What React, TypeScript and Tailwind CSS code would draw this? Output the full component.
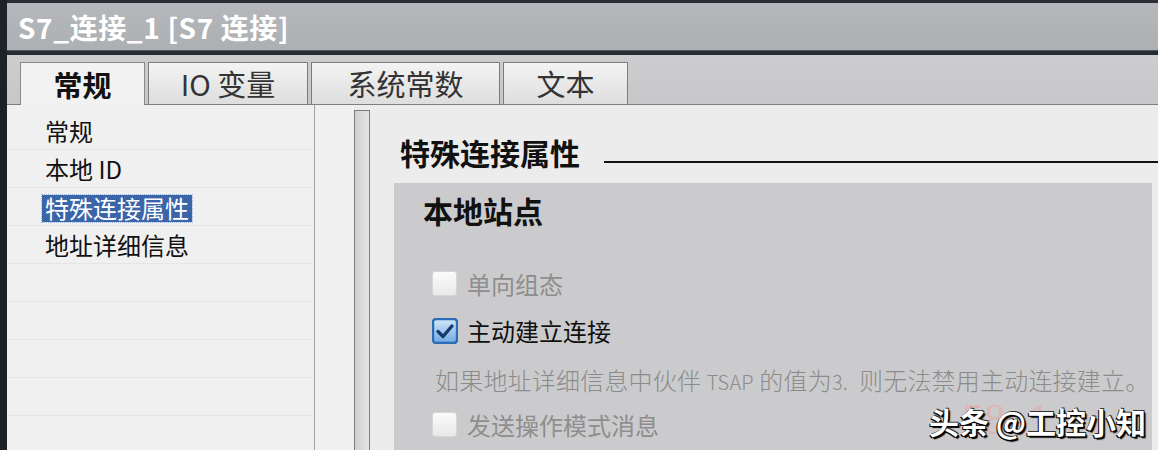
import React from 'react'

const font = { fontFamily: '"Noto Sans CJK SC", "Noto Sans", sans-serif' }

const tabs = [
  { label: '常规', w: 'w-[125px]', active: true },
  { label: 'IO 变量', w: 'w-[160px]', active: false },
  { label: '系统常数', w: 'w-[189px]', active: false },
  { label: '文本', w: 'w-[125px]', active: false },
]

const navItems = ['常规', '本地 ID', '特殊连接属性', '地址详细信息', '', '', '', '', '']

function CheckBox({ checked }: { checked?: boolean }) {
  if (checked) {
    return (
      <svg width="26" height="26" viewBox="0 0 26 26" className="shrink-0">
        <defs>
          <linearGradient id="cbBlue" x1="0" y1="0" x2="0" y2="1">
            <stop offset="0" stopColor="#d4e8fa" />
            <stop offset="1" stopColor="#6fa8e2" />
          </linearGradient>
        </defs>
        <rect x="1" y="1" width="24" height="24" rx="3" fill="url(#cbBlue)" stroke="#2a6db6" strokeWidth="2.4" />
        <path d="M6 13.5L11 18.5L20 8" fill="none" stroke="#173a6c" strokeWidth="3.4" strokeLinecap="round" strokeLinejoin="round" />
      </svg>
    )
  }
  return (
    <div className="w-[25px] h-[25px] shrink-0 rounded-[3px] border border-[#d6d6d6] bg-gradient-to-b from-[#fbfbfb] to-[#e9e9e9]" />
  )
}

export default function App() {
  return (
    <div className="relative w-[1158px] h-[450px] overflow-hidden flex bg-[#ececec]" style={font}>
      {/* left dark frame */}
      <div className="w-[7px] h-full shrink-0 bg-[#1d2228]" />

      <div className="flex-1 flex flex-col min-w-0">
        {/* title bar */}
        <div className="h-[3px] bg-[#2a2f35]" />
        <div className="h-[47px] flex items-center pl-[11px] bg-gradient-to-b from-[#b5b7ba] to-[#adb0b3]">
          <span className="text-white text-[28px] font-semibold leading-none tracking-[0.6px]">S7_连接_1 [S7 连接]</span>
        </div>
        <div className="h-[5px] bg-[#262c32] border-t border-[#4a5560]" />

        {/* tab strip */}
        <div className="h-[50px] flex items-end gap-[3px] pl-[13px] bg-gradient-to-b from-[#cdcdcf] to-[#c7c7c9] border-b border-[#7e7e7e]">
          {tabs.map((t) =>
            t.active ? (
              <div
                key={t.label}
                className={`${t.w} shrink-0 h-[43px] -mb-px relative z-10 flex items-center justify-center bg-[#f2f2f2] border border-b-0 border-[#8a8a8a] text-[29px] font-bold text-[#111] leading-none`}
              >
                {t.label}
              </div>
            ) : (
              <div
                key={t.label}
                className={`${t.w} shrink-0 h-[42px] flex items-center justify-center bg-gradient-to-b from-[#f3f3f3] to-[#dedede] border border-b-0 border-[#7c7c7c] text-[29px] text-[#333] leading-none`}
              >
                {t.label}
              </div>
            )
          )}
        </div>

        {/* body */}
        <div className="flex-1 flex min-h-0">
          {/* navigation */}
          <div className="w-[308px] shrink-0 bg-[#f0f0f0] pt-[7px] border-r border-[#a2a2a2]">
            {navItems.map((n, i) => (
              <div key={i} className="h-[38px] flex items-center pl-[35px] border-b border-[#e5e5e5] text-[24px] leading-none text-[#111]">
                {n === '特殊连接属性' ? (
                  <span className="bg-[#3b65a9] text-white px-[3px] pt-[1px] pb-[2px] mt-[4px] outline-1 outline-dotted outline-[#9fb6d8]">{n}</span>
                ) : (
                  <span className="px-[3px]">{n}</span>
                )}
              </div>
            ))}
          </div>
          <div className="w-[39px] shrink-0 bg-[#f0f0f0]" />

          {/* splitter */}
          <div className="w-[16px] shrink-0 flex flex-col bg-[#ececec]">
            <div className="mt-[5px] flex-1 border border-b-0 border-[#7a7a7a] bg-gradient-to-r from-[#cfd0d2] to-[#e2e3e4]" />
          </div>

          {/* content */}
          <div className="flex-1 min-w-0 bg-[#ececec] pt-[29px]">
            <div className="h-[36px] flex items-end pl-[30px]">
              <span className="text-[30px] font-bold leading-[36px] text-[#111]">特殊连接属性</span>
              <div className="flex-1 h-[2px] bg-[#111] ml-[24px] mb-[7px]" />
            </div>

            <div className="mt-[13px] ml-[24px] mr-[6px] h-[300px] bg-[#cbcbcd] pt-[9px]">
              <div className="pl-[29px] text-[30px] font-bold leading-[36px] text-[#111]">本地站点</div>

              <div className="mt-[32px] pl-[38px]">
                <div className="h-[47px] flex items-center gap-[10px]">
                  <CheckBox />
                  <span className="text-[24px] leading-none text-[#8e8e8e]">单向组态</span>
                </div>
                <div className="h-[47px] flex items-center gap-[9px]">
                  <CheckBox checked />
                  <span className="text-[24px] leading-none text-[#111]">主动建立连接</span>
                </div>
                <div className="h-[47px] flex items-center pl-[3px] pt-[5px]">
                  <span className="text-[24px] leading-none text-[#8b8b8b] font-light whitespace-nowrap tracking-[0.2px]">
                    如果地址详细信息中伙伴 <span className="text-[20px]">TSAP</span> 的值为<span className="text-[20px]">3.</span>&nbsp; 则无法禁用主动连接建立。
                  </span>
                </div>
                <div className="h-[47px] flex items-center gap-[10px]">
                  <CheckBox />
                  <span className="text-[24px] leading-none text-[#8e8e8e]">发送操作模式消息</span>
                </div>
              </div>
            </div>
          </div>
        </div>
      </div>

      {/* watermark */}
      <div className="absolute left-[962px] top-[398px] text-[44px] leading-none text-[#e4a9a9] opacity-60" style={{ fontFamily: '"Liberation Serif", serif' }}>
        58 .1
      </div>
      <div className="absolute left-[929px] top-[406px] text-[30px] font-bold leading-none text-white [text-shadow:1px_1px_0_#000,-1px_1px_0_#000,1px_-1px_0_#333,2px_2px_1px_#000]">
        头条 @工控小知
      </div>
    </div>
  )
}
